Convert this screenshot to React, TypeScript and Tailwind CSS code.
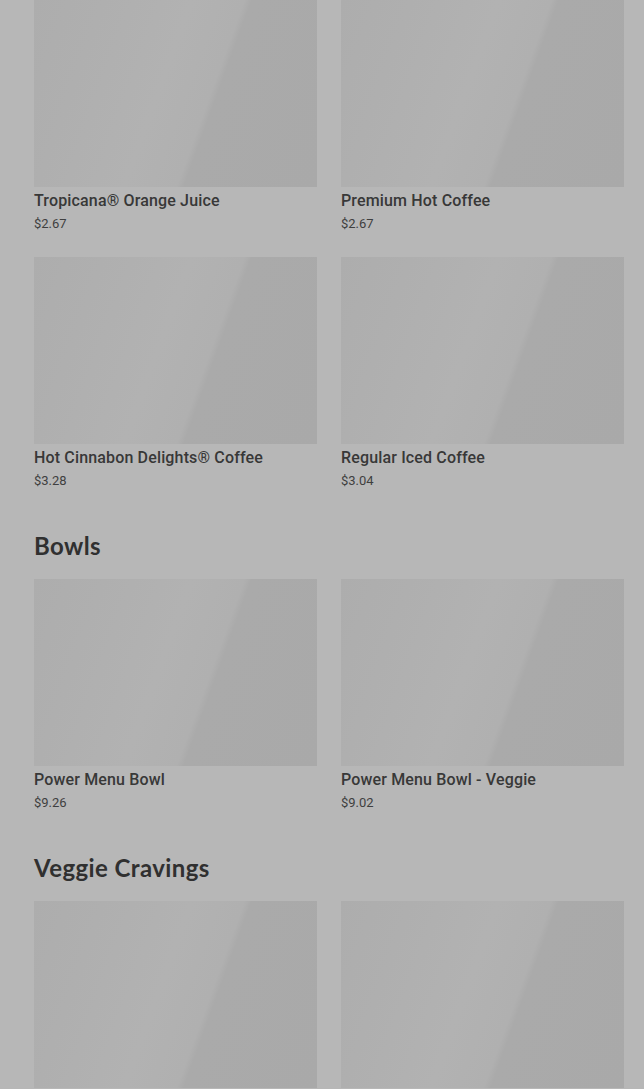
import React from 'react';

type Item = { name: string; price: string };

const sections: { title?: string; items: Item[] }[] = [
  {
    items: [
      { name: 'Tropicana® Orange Juice', price: '$2.67' },
      { name: 'Premium Hot Coffee', price: '$2.67' },
      { name: 'Hot Cinnabon Delights® Coffee', price: '$3.28' },
      { name: 'Regular Iced Coffee', price: '$3.04' },
    ],
  },
  {
    title: 'Bowls',
    items: [
      { name: 'Power Menu Bowl', price: '$9.26' },
      { name: 'Power Menu Bowl - Veggie', price: '$9.02' },
    ],
  },
  {
    title: 'Veggie Cravings',
    items: [
      { name: '', price: '' },
      { name: '', price: '' },
    ],
  },
];

const Card: React.FC<{ item: Item }> = ({ item }) => (
  <div className="flex flex-col">
    <div className="h-[187px] w-full bg-[linear-gradient(110deg,#adadad_0%,#afafaf_20%,#b2b2b2_45%,#b0b0b0_60%,#aaaaaa_62%,#a9a9a9_100%)]" />
    {item.name && (
      <>
        <div className="mt-[4px] text-[16px] leading-[20px] font-medium tracking-[0.15px] text-[#383838]">{item.name}</div>
        <div className="mt-[5px] text-[13px] leading-[16px] text-[#3f3f3f]">{item.price}</div>
      </>
    )}
  </div>
);

export default function App() {
  return (
    <div className="bg-[#b7b7b7] pl-[34px] pr-[20px] font-['Roboto','Liberation_Sans',sans-serif] overflow-hidden h-[1089px]">
      {sections.map((s, i) => (
        <div key={i} className={i > 0 ? 'mt-[41px]' : ''}>
          {s.title && (
            <h2 className="mb-[17px] text-[24px] leading-[32px] font-bold tracking-[0.4px] text-[#303030] font-['Lato','Liberation_Sans',sans-serif]">
              {s.title}
            </h2>
          )}
          <div className="grid grid-cols-2 gap-x-[24px] gap-y-[25px]">
            {s.items.map((it, j) => (
              <Card key={j} item={it} />
            ))}
          </div>
        </div>
      ))}
    </div>
  );
}
